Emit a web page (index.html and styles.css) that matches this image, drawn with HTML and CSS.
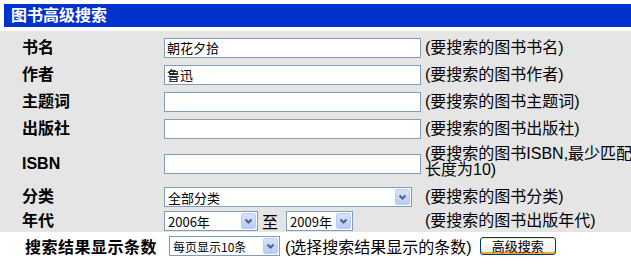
FILE: index.html
```html
<!DOCTYPE html>
<html lang="zh-CN">
<head>
    <meta charset="UTF-8">
    <title>图书高级搜索</title>
    <link rel="stylesheet" href="styles.css">
</head>
<body>
    <div class="title-bar">图书高级搜索</div>

    <form class="search-form" onsubmit="return false;">
        <div class="field-grid">
            <label class="field-label">书名</label>
            <div class="field-input"><input type="text" class="text-box" value="朝花夕拾"></div>
            <div class="field-hint">(要搜索的图书书名)</div>

            <label class="field-label">作者</label>
            <div class="field-input"><input type="text" class="text-box" value="鲁迅"></div>
            <div class="field-hint">(要搜索的图书作者)</div>

            <label class="field-label">主题词</label>
            <div class="field-input"><input type="text" class="text-box"></div>
            <div class="field-hint">(要搜索的图书主题词)</div>

            <label class="field-label">出版社</label>
            <div class="field-input"><input type="text" class="text-box"></div>
            <div class="field-hint">(要搜索的图书出版社)</div>

            <label class="field-label latin">ISBN</label>
            <div class="field-input"><input type="text" class="text-box"></div>
            <div class="field-hint two-line">(要搜索的图书ISBN,最少匹配<br>长度为10)</div>

            <label class="field-label">分类</label>
            <div class="field-input">
                <span class="combo combo-category">
                    <select><option>全部分类</option></select>
                    <span class="combo-btn"><svg width="15" height="16" viewBox="0 0 15 16"><path d="M4.5 6.5 L7.5 9.5 L10.5 6.5" fill="none" stroke="#4d6185" stroke-width="2"/></svg></span>
                </span>
            </div>
            <div class="field-hint">(要搜索的图书分类)</div>

            <label class="field-label">年代</label>
            <div class="field-input year-range">
                <span class="combo combo-year-from">
                    <select><option>2006年</option></select>
                    <span class="combo-btn"><svg width="15" height="16" viewBox="0 0 15 16"><path d="M4.5 6.5 L7.5 9.5 L10.5 6.5" fill="none" stroke="#4d6185" stroke-width="2"/></svg></span>
                </span>
                <span class="range-sep">至</span>
                <span class="combo combo-year-to">
                    <select><option>2009年</option></select>
                    <span class="combo-btn"><svg width="15" height="16" viewBox="0 0 15 16"><path d="M4.5 6.5 L7.5 9.5 L10.5 6.5" fill="none" stroke="#4d6185" stroke-width="2"/></svg></span>
                </span>
            </div>
            <div class="field-hint">(要搜索的图书出版年代)</div>
        </div>

        <div class="submit-row">
            <label class="submit-label">搜索结果显示条数</label>
            <span class="combo combo-page">
                <select><option>每页显示10条</option></select>
                <span class="combo-btn"><svg width="15" height="16" viewBox="0 0 15 16"><path d="M4.5 6.5 L7.5 9.5 L10.5 6.5" fill="none" stroke="#4d6185" stroke-width="2"/></svg></span>
            </span>
            <span class="submit-hint">(选择搜索结果显示的条数)</span>
            <button type="submit" class="search-button">高级搜索</button>
        </div>
    </form>
</body>
</html>
```

FILE: styles.css
```css
body {
    margin: 0;
    padding: 0;
    overflow: hidden;
    background: #fff;
    color: #000;
    font-family: "Liberation Sans", "Noto Sans CJK SC", sans-serif;
    font-size: 16px;
}
.title-bar {
    margin: 4px 0 4px 4px;
    height: 23px;
    line-height: 23px;
    padding-left: 7px;
    background-color: #0033cc;
    color: #fff;
    font-weight: bold;
    font-size: 16px;
}
.search-form {
    margin: 0;
}
.field-grid {
    display: grid;
    grid-template-columns: 142px 261px 1fr;
    grid-template-rows: 27px 27px 27px 27px 43px 24px 23px;
    align-items: center;
    padding: 3px 0 0 22px;
    background-color: #e5e5e5;
}
.field-label {
    font-weight: bold;
    font-size: 16px;
    line-height: 20px;
}
.field-input {
    display: flex;
    align-items: center;
}
.field-hint {
    font-size: 16px;
    line-height: 20px;
    white-space: nowrap;
}
.field-hint.two-line {
    line-height: 16px;
    margin-top: -3px;
}
.text-box {
    box-sizing: border-box;
    width: 257px;
    height: 20px;
    margin: 0;
    padding: 0 2px;
    border: 1px solid #7f9db9;
    background: #fff;
    font-family: "Noto Sans CJK SC", sans-serif;
    font-size: 13px;
    color: #000;
    outline: none;
}
.combo {
    position: relative;
    display: inline-block;
    height: 20px;
}
.combo select {
    -webkit-appearance: none;
    appearance: none;
    box-sizing: border-box;
    width: 100%;
    height: 20px;
    margin: 0;
    padding: 0 0 0 3px;
    border: 1px solid #7f9db9;
    border-radius: 0;
    background: #fff;
    font-family: "Noto Sans CJK SC", sans-serif;
    font-size: 13px;
    color: #000;
    outline: none;
}
.combo-btn {
    position: absolute;
    top: 2px;
    right: 2px;
    width: 15px;
    height: 16px;
    box-sizing: border-box;
    border: 1px solid #b9cdf6;
    border-radius: 2px;
    background: linear-gradient(#d6e3fd, #b8cbf6);
    pointer-events: none;
}
.combo-btn svg {
    display: block;
    margin: -1px 0 0 -1px;
}
.combo-category {
    width: 248px;
}
.year-range {
    display: flex;
}
.combo-year-from {
    width: 94px;
}
.range-sep {
    margin: 0 8px 0 4px;
    font-size: 16px;
}
.combo-year-to {
    width: 67px;
}
.submit-row {
    display: flex;
    align-items: center;
    height: 28px;
    padding-left: 25px;
}
.submit-label {
    width: 144px;
    font-weight: bold;
    font-size: 16px;
    letter-spacing: 0.5px;
}
.combo-page {
    width: 111px;
}
.combo-page select {
    font-size: 12px;
}
.submit-hint {
    margin-left: 5px;
    font-size: 16px;
    white-space: nowrap;
}
.search-button {
    margin-left: 8px;
    width: 76px;
    height: 18px;
    padding: 0;
    border: 1px solid #003c74;
    border-radius: 3px;
    background: linear-gradient(#ffffff, #f0efe6);
    box-shadow: inset 0 1px 0 #ffe7a2, inset 0 -2px 0 #eea53a;
    font-family: "Noto Sans CJK SC", sans-serif;
    font-size: 13px;
    line-height: 14px;
    color: #000;
    cursor: pointer;
}
```
